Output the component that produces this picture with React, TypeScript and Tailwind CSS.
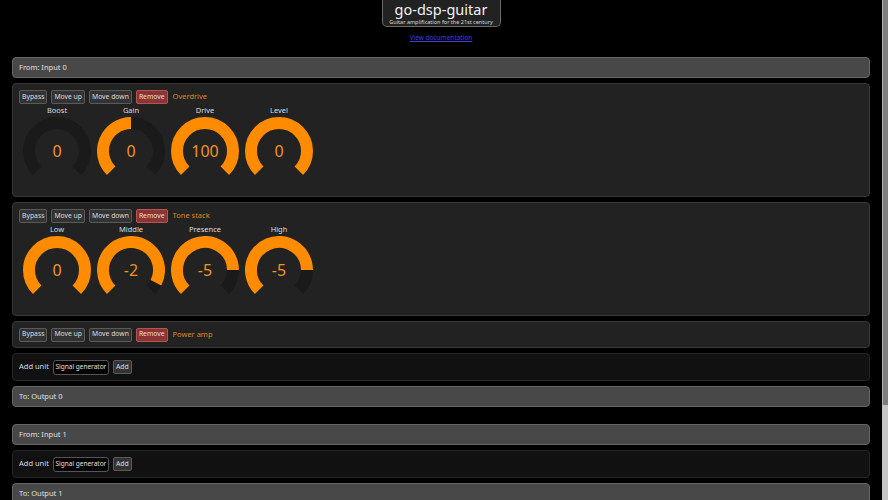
import React from 'react';

type KnobDef = { label: string; value: string; fraction: number };

const overdrive: KnobDef[] = [
  { label: 'Boost', value: '0', fraction: 0 },
  { label: 'Gain', value: '0', fraction: 0.5 },
  { label: 'Drive', value: '100', fraction: 1 },
  { label: 'Level', value: '0', fraction: 1 },
];

const toneStack: KnobDef[] = [
  { label: 'Low', value: '0', fraction: 1 },
  { label: 'Middle', value: '-2', fraction: 28 / 30 },
  { label: 'Presence', value: '-5', fraction: 25 / 30 },
  { label: 'High', value: '-5', fraction: 25 / 30 },
];

const font = { fontFamily: '"Noto Sans", "DejaVu Sans", sans-serif' };

function point(angle: number, r: number, c: number) {
  const rad = (angle * Math.PI) / 180;
  return [c + r * Math.sin(rad), c - r * Math.cos(rad)];
}

function arc(from: number, to: number, r: number, c: number) {
  const [x1, y1] = point(from, r, c);
  const [x2, y2] = point(to, r, c);
  const large = to - from > 180 ? 1 : 0;
  return `M ${x1} ${y1} A ${r} ${r} 0 ${large} 1 ${x2} ${y2}`;
}

function Knob({ label, value, fraction }: KnobDef) {
  const start = -135;
  const end = start + 270 * fraction;
  return (
    <div className="w-[74px] flex flex-col items-center">
      <div className="h-[10px] leading-[10px] text-[7.5px] text-[#dddddd]">{label}</div>
      <div className="relative mt-[2px] w-[68px] h-[68px]">
        <svg width="68" height="68" viewBox="0 0 68 68">
          <path d={arc(-135, 135, 28, 34)} fill="none" stroke="#1a1a1a" strokeWidth="12" />
          {fraction > 0 && (
            <path d={arc(start, end, 28, 34)} fill="none" stroke="#ff8c00" strokeWidth="12" />
          )}
        </svg>
        <div className="absolute inset-0 flex items-center justify-center text-[16px] text-[#f0931f]">
          {value}
        </div>
      </div>
    </div>
  );
}

function Btn({ children, danger }: { children: React.ReactNode; danger?: boolean }) {
  return (
    <button
      className={`h-[14px] px-[2px] rounded-[2px] border text-[6.8px] leading-none whitespace-nowrap ${
        danger
          ? 'bg-[#8a3434] border-[#b25454] text-[#f0dede]'
          : 'bg-[#333333] border-[#5a5a5a] text-[#dddddd]'
      }`}
    >
      {children}
    </button>
  );
}

function UnitBar({ name }: { name: string }) {
  return (
    <div className="flex items-center gap-[4px]">
      <Btn>Bypass</Btn>
      <Btn>Move up</Btn>
      <Btn>Move down</Btn>
      <Btn danger>Remove</Btn>
      <span className="ml-[1px] text-[7.5px] text-[#d98a1e]">{name}</span>
    </div>
  );
}

function KnobUnit({ name, knobs }: { name: string; knobs: KnobDef[] }) {
  return (
    <div className="h-[114px] rounded-[4px] border border-[#383838] bg-[#222222] px-[6px] pt-[6px]">
      <UnitBar name={name} />
      <div className="flex mt-[1px] ml-[1px]">
        {knobs.map(k => (
          <Knob key={k.label} {...k} />
        ))}
      </div>
    </div>
  );
}

function Endpoint({ text }: { text: string }) {
  return (
    <div className="h-[21px] flex items-center px-[6px] rounded-[4px] border border-[#666666] bg-[#484848] text-[7.5px] text-[#e0e0e0]">
      {text}
    </div>
  );
}

function AddUnit() {
  return (
    <div className="h-[28px] flex items-center gap-[4px] px-[6px] rounded-[4px] border border-[#262626] bg-[#111111] text-[7.5px] text-[#dddddd]">
      <span>Add unit</span>
      <div className="h-[15px] w-[56px] flex items-center justify-center whitespace-nowrap rounded-[3px] border border-[#555555] bg-black text-[6.5px] text-[#e0e0e0]">
        Signal generator
      </div>
      <Btn>Add</Btn>
    </div>
  );
}

export default function App() {
  return (
    <div style={font} className="h-screen flex overflow-hidden bg-black">
      <div className="flex-1 min-w-0 px-[12px]">
        <div className="flex flex-col items-center">
          <div className="w-[119px] h-[27px] flex flex-col items-center rounded-b-[5px] border border-t-0 border-[#6a6a6a] bg-[#222222]">
            <div className="text-[14.5px] leading-[19px] text-[#f2f2f2]">go-dsp-guitar</div>
            <div className="text-[5.5px] leading-[7px] text-[#d8d8d8] whitespace-nowrap">Guitar amplification for the 21st century</div>
          </div>
          <a href="#" className="mt-[7px] text-[6.5px] leading-[8px] text-[#3d3de0] underline">
            View documentation
          </a>
        </div>

        <div className="mt-[15px] flex flex-col gap-[5px]">
          <Endpoint text="From: Input 0" />
          <KnobUnit name="Overdrive" knobs={overdrive} />
          <KnobUnit name="Tone stack" knobs={toneStack} />
          <div className="h-[27px] flex items-center rounded-[4px] border border-[#383838] bg-[#222222] px-[6px]">
            <UnitBar name="Power amp" />
          </div>
          <AddUnit />
          <Endpoint text="To: Output 0" />
        </div>

        <div className="mt-[17px] flex flex-col gap-[5px]">
          <Endpoint text="From: Input 1" />
          <AddUnit />
          <Endpoint text="To: Output 1" />
        </div>
      </div>
      <div className="w-[6px] flex flex-col bg-[#c4c4c4]">
        <div className="h-[405px] border-l border-[#b4b4b4] bg-[#7e7e7e]" />
        <div className="flex-1" />
      </div>
    </div>
  );
}
